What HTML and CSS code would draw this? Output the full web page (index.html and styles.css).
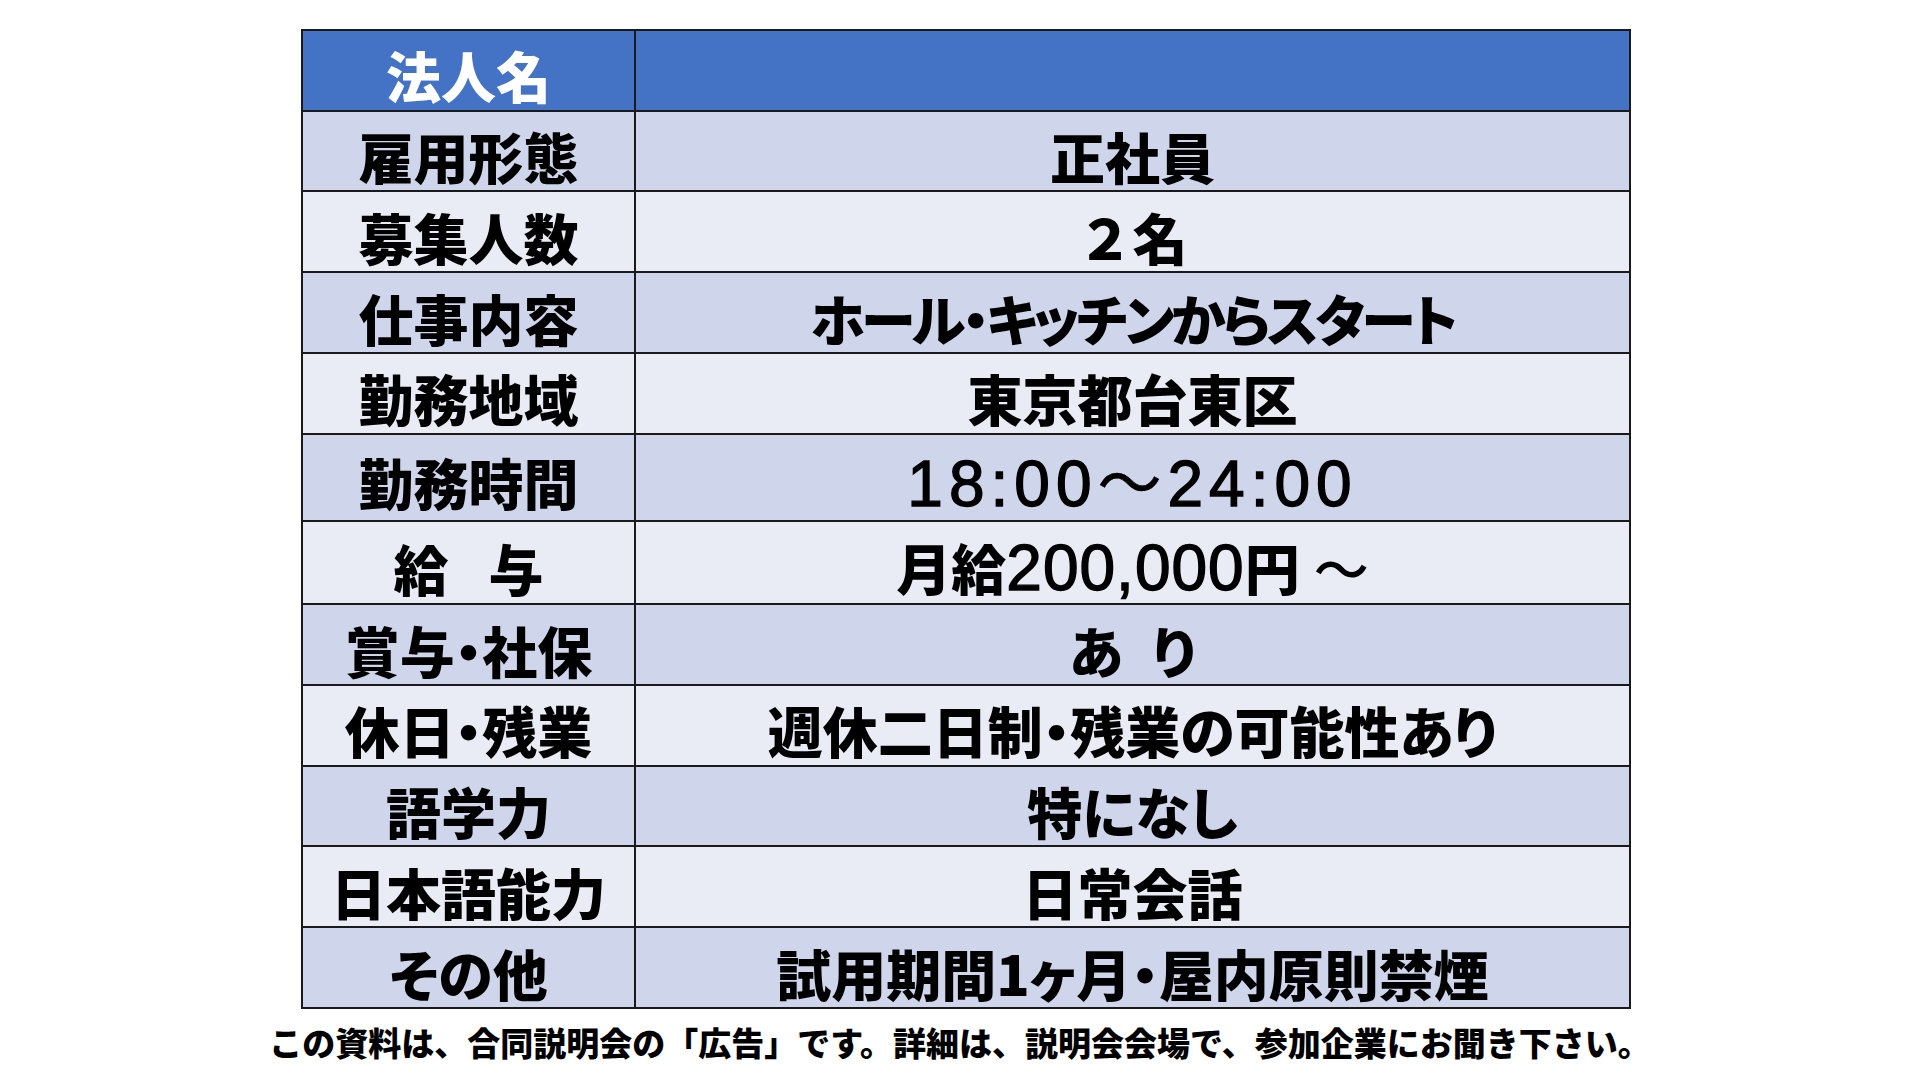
FILE: index.html
```html
<!DOCTYPE html>
<html lang="ja">
<head>
<meta charset="utf-8">
<title>求人票</title>
<link rel="stylesheet" href="styles.css">
</head>
<body>
<div class="page">
  <table class="job">
    <tr class="head"><th class="label">法人名</th><td class="value"></td></tr>
    <tr class="odd"><th class="label">雇用形態</th><td class="value">正社員</td></tr>
    <tr class="even"><th class="label">募集人数</th><td class="value full">２名</td></tr>
    <tr class="odd"><th class="label">仕事内容</th><td class="value tight">ホール・キッチンからスタート</td></tr>
    <tr class="even"><th class="label">勤務地域</th><td class="value">東京都台東区</td></tr>
    <tr class="odd"><th class="label">勤務時間</th><td class="value"><span class="time">18:00<span class="wave">～</span>24:00</span></td></tr>
    <tr class="even"><th class="label">給<span class="gap-s"></span>与</th><td class="value">月給<span class="num">200,000</span>円<span class="gap-xs"></span><span class="tilde">～</span></td></tr>
    <tr class="odd"><th class="label">賞与・社保</th><td class="value">あ<span class="gap-m"></span>り</td></tr>
    <tr class="even"><th class="label">休日・残業</th><td class="value">週休二日制・残業の可能性あり</td></tr>
    <tr class="odd"><th class="label">語学力</th><td class="value">特になし</td></tr>
    <tr class="even"><th class="label">日本語能力</th><td class="value">日常会話</td></tr>
    <tr class="odd"><th class="label">その他</th><td class="value">試用期間1ヶ月・屋内原則禁煙</td></tr>
  </table>
  <p class="note">この資料は、合同説明会の「広告」です。詳細は、説明会会場で、参加企業にお聞き下さい。</p>
</div>
</body>
</html>
```
FILE: styles.css
```css
html, body {
  margin: 0;
  padding: 0;
  background: #ffffff;
}
.page {
  width: 1920px;
  height: 1080px;
  padding-top: 29px;
  box-sizing: border-box;
  font-family: "Noto Sans CJK JP", "Noto Sans CJK SC", sans-serif;
  color: #000000;
}
.job {
  margin-left: 301px;
  width: 1330px;
  height: 980px;
  border-collapse: collapse;
  border: 2px solid #000000;
  table-layout: fixed;
}
.job th, .job td {
  border: 2px solid #1a1a1a;
  padding: 8px 0 0 0;
  text-align: center;
  vertical-align: middle;
  font-size: 55px;
  font-weight: 900;
  line-height: 60px;
  font-feature-settings: "palt" 1;
  white-space: nowrap;
}
.job .label {
  width: 331px;
}
.head th, .head td {
  background: #4472c4;
  color: #ffffff;
}
.odd th, .odd td {
  background: #cfd5ea;
}
.even th, .even td {
  background: #e9ebf5;
}
.job .full {
  font-feature-settings: normal;
}
.job .tight {
  letter-spacing: -3.4px;
}
.gap-xs {
  display: inline-block;
  width: 14px;
}
.gap-s {
  display: inline-block;
  width: 40px;
}
.gap-m {
  display: inline-block;
  width: 29px;
}
.time {
  font-family: "Liberation Sans", "Noto Sans CJK JP", sans-serif;
  font-weight: 400;
  font-size: 64px;
  letter-spacing: 6px;
  -webkit-text-stroke: 1.4px #000000;
}
.wave {
  font-family: "Noto Sans CJK JP", sans-serif;
  font-weight: 400;
  -webkit-text-stroke: 0.6px #000000;
}
.num {
  font-family: "Liberation Sans", sans-serif;
  font-weight: 400;
  font-size: 64px;
  letter-spacing: 1px;
  -webkit-text-stroke: 1.4px #000000;
}
.tilde {
  font-weight: 500;
}
.note {
  margin: 13px 0 0 0;
  text-align: center;
  font-size: 33px;
  font-weight: 900;
  line-height: 40px;
  white-space: nowrap;
}
```
